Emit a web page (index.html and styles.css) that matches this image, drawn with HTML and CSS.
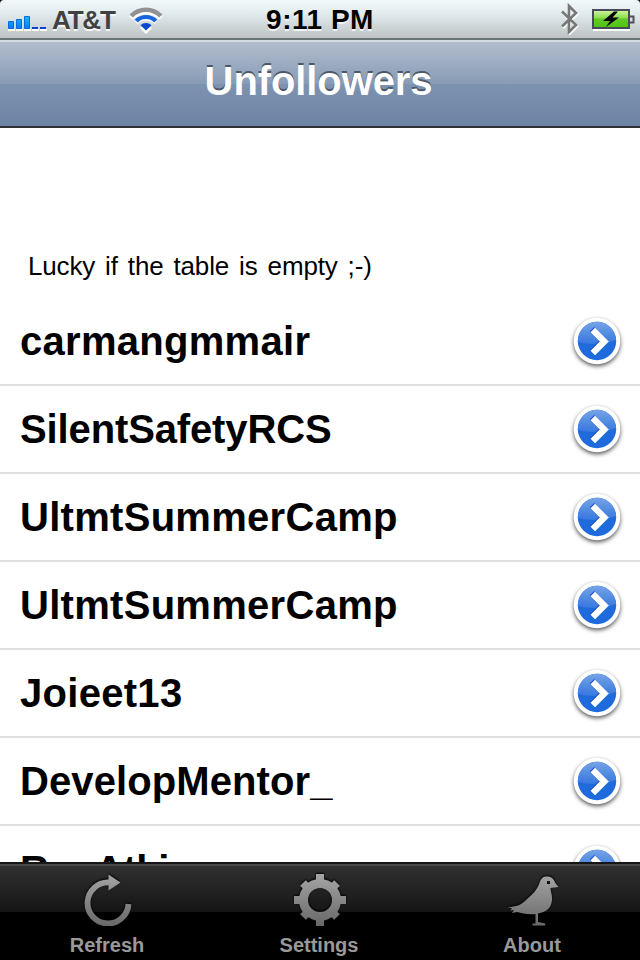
FILE: index.html
```html
<!DOCTYPE html>
<html lang="en">
<head>
<meta charset="utf-8">
<title>Unfollowers</title>
<link rel="stylesheet" href="styles.css">
</head>
<body>
<svg class="defs" aria-hidden="true">
  <defs>
    <linearGradient id="silver" gradientUnits="userSpaceOnUse" x1="0" y1="0" x2="0" y2="56"><stop offset="0" stop-color="#aaa"/><stop offset="1" stop-color="#686868"/></linearGradient>
    <linearGradient id="gloss" x1="0" y1="0" x2="0" y2="1"><stop offset="0" stop-color="#75a3e6"/><stop offset="1" stop-color="#3578dc"/></linearGradient>
    <linearGradient id="signal" x1="0" y1="0" x2="0" y2="1"><stop offset="0" stop-color="#22b4fa"/><stop offset="1" stop-color="#0879f0"/></linearGradient>
    <linearGradient id="charge" x1="0" y1="0" x2="0" y2="1"><stop offset="0" stop-color="#d3f6a0"/><stop offset=".42" stop-color="#8fe052"/><stop offset=".5" stop-color="#5fc925"/><stop offset="1" stop-color="#4fc40f"/></linearGradient>
    <symbol id="disclosure" viewBox="0 0 56 60">
      <circle class="disc-ring" cx="28" cy="29" r="23.3"/>
      <circle cx="28" cy="29" r="19.2" fill="#206bdc"/>
      <path d="M8.8 29a19.2 19.2 0 0 1 38.4 0v-1Q28 35 8.8 30z" fill="url(#gloss)"/>
      <path d="M23.500 18 35 29.500 23.500 41" transform="translate(-.6 -.8)" fill="none" stroke="#1658c8" stroke-width="6.200"/>
      <path d="M23.800 18 35.300 29.500 23.800 41" fill="none" stroke="#fff" stroke-width="6.400"/>
    </symbol>
  </defs>
</svg>
<div class="screen">
  <header class="status">
    <div class="status-left">
      <svg class="signal" width="40" height="16" viewBox="0 0 40 16">
        <path d="M0 15h7m1 0h7m1 0h7m1 0h7m1 0h7" stroke="#fff" stroke-width="2"/>
        <g fill="url(#signal)" stroke="#086be3"><path d="M.5 6.500h5v7h-5zM8.500 4.500h5v9h-5zM16.500 1.500h5v12h-5z"/></g>
        <path d="M24 13h6m2 0h6" stroke="#0c43c6" stroke-width="2"/>
      </svg>
      <span class="carrier">AT&amp;T</span>
      <svg class="wifi" width="34" height="28" viewBox="0 0 34 28">
        <g fill="none" stroke="#fff" transform="translate(0 1.5)"><path d="M2 9.5a21.500 21.500 0 0 1 30 0" stroke-width="5"/><path d="M7 14a14.500 14.500 0 0 1 20 0" stroke-width="4"/><path d="M12 18.500 17 23.500l5-5" stroke-width="3"/></g>
        <path d="M2.200 9a20.700 20.700 0 0 1 29.600 0" fill="none" stroke="#929292" stroke-width="4.600"/>
        <path d="M7.200 14a14 14 0 0 1 19.600 0" fill="none" stroke="#1566df" stroke-width="4.200"/>
        <path d="M11.500 18.300a7.500 7.500 0 0 1 11 0L17 23.600z" fill="#0b49cf"/>
      </svg>
    </div>
    <span class="clock">9:11 PM</span>
    <div class="status-right">
      <svg width="20" height="34" viewBox="0 0 20 34">
        <path d="M2 10.500 16 24l-7 7V5l7 7L2 25.500" transform="translate(.7 1.3)" fill="none" stroke="#fff" stroke-width="3"/>
        <path d="M2 10.500 16 24l-7 7V5l7 7L2 25.500" fill="none" stroke="#777" stroke-width="2.600"/>
      </svg>
      <svg width="44" height="24" viewBox="0 0 44 24">
        <path d="M1 21h37" stroke="#fff" stroke-width="2"/>
        <path d="M38 7.500h3.500v6H38" fill="#ddd" stroke="#50535e" stroke-width="2"/>
        <rect x="1" y="1" width="36" height="18" fill="url(#charge)" stroke="#474a5b" stroke-width="2"/>
        <path d="M22 2.500 11 12h7L14 18 27 8.500h-6.500L26 2.500z" fill="#000"/>
      </svg>
    </div>
  </header>
  <div class="navbar"><h1>Unfollowers</h1></div>
  <main class="content">
    <p class="caption">Lucky if the table is empty ;-)</p>
    <ul class="list">
      <li><span class="wide">carmangmmair</span><svg><use href="#disclosure"/></svg></li>
      <li><span class="tight">SilentSafetyRCS</span><svg><use href="#disclosure"/></svg></li>
      <li><span class="wide">UltmtSummerCamp</span><svg><use href="#disclosure"/></svg></li>
      <li><span class="wide">UltmtSummerCamp</span><svg><use href="#disclosure"/></svg></li>
      <li><span class="wide">Joieet13</span><svg><use href="#disclosure"/></svg></li>
      <li><span class="loose">DevelopMentor_</span><svg><use href="#disclosure"/></svg></li>
      <li><span class="partial">RoyAtkinson</span><svg><use href="#disclosure"/></svg></li>
    </ul>
  </main>
  <nav class="tabs">
    <a class="tab">
      <svg width="60" height="56" viewBox="0 0 60 56">
        <path d="M51.500 34A20.500 20.500 0 1 1 32 12.500" fill="none" stroke="url(#silver)" stroke-width="5.800"/>
        <path d="M31.500 4.500 43.500 12.500 31.500 20.500z" fill="url(#silver)"/>
      </svg>
      <span>Refresh</span>
    </a>
    <a class="tab">
      <svg width="60" height="56" viewBox="0 0 60 56">
        <g fill="none" stroke="url(#silver)">
          <circle cx="31" cy="30" r="16.500" stroke-width="9"/>
          <path stroke-width="8" d="M31.010 4 31 12m0 36 .01 8M5 30l8 .01m36 0L57 30"/>
          <path d="m14 13 6 6m22 22 6 6m0-34-6 6M20 41l-6 6" stroke-width="8"/>
        </g>
      </svg>
      <span>Settings</span>
    </a>
    <a class="tab">
      <svg width="60" height="56" viewBox="0 0 60 56">
        <path fill="url(#silver)" fill-rule="evenodd" d="M6 37c8 0 13-2 18-7 7-6 11-10 13.500-17C39 7.500 42 6 46 6.500c4 .5 6 3 7 6l3.500 4.500c-3 .5-6 .5-8 1 0 4 2 7 1.500 12-.5 8-6 12-14 13.500v8.500l7.500 1.500-.5 2H30.500v-2h3V44C26 45 20 43 15 42l-5 1 2-3-4 .5 2-2z M45 11v3h3v-3z"/>
      </svg>
      <span>About</span>
    </a>
  </nav>
</div>
</body>
</html>
```
FILE: styles.css
```css
* { box-sizing: border-box; }
body { margin: 0; background: #000; font-family: "Liberation Sans", Arial, sans-serif; }
.defs { position: absolute; width: 0; height: 0; }
.screen { width: 640px; height: 960px; display: flex; flex-direction: column; overflow: hidden; }
.status {
  height: 40px; flex: none; display: grid; grid-template-columns: 1fr auto 1fr;
  background: linear-gradient(#f2f9fb, #e2ebee 35%, #bdc3c5); border-bottom: 2px solid #687475;
  border-radius: 4px 4px 0 0;
}
.status svg { display: block; flex: none; }
.status-left { display: flex; padding-left: 8px; }
.signal { margin-top: 15px; }
.carrier { width: 64px; margin-left: 4px; font-size: 26px; line-height: 40px; font-weight: bold; letter-spacing: -1.2px; color: #414141; text-shadow: 0 2px #f5f7f7; white-space: nowrap; }
.wifi { margin: 7px 0 0 13px; }
.clock { font-size: 28px; line-height: 39px; font-weight: bold; letter-spacing: .5px; color: #000; text-shadow: 0 2px #f0f3f3; }
.status-right { display: flex; justify-content: flex-end; gap: 12px; padding: 1px 4px 0 0; }
.status-right svg + svg { margin-top: 8px; }
.navbar {
  height: 88px; flex: none; border-top: 2px solid #d3dae3; border-bottom: 2px solid #2d3034;
  background: linear-gradient(#b1bdcd, #889bb5 50%, #7e93b0 50%, #6c83a4);
}
.navbar h1 { margin: 0; padding-right: 3px; text-align: center; font-size: 40px; line-height: 78px; letter-spacing: -.1px; color: #fff; text-shadow: 0 -2px #4b5868; }
.content { flex: 1; min-height: 0; overflow: hidden; background: #fff; padding-top: 123px; }
.caption { margin: 0; height: 47px; padding-left: 28px; font-size: 26px; line-height: 30px; letter-spacing: -.17px; color: #000; white-space: nowrap; word-spacing: 3px; }
.list { margin: 0; padding: 0; list-style: none; }
.list li { height: 88px; border-bottom: 2px solid #e0e0e0; display: flex; align-items: center; justify-content: space-between; padding: 0 15px 0 20px; font-size: 40px; font-weight: bold; color: #000; }
.list svg { width: 56px; height: 60px; margin-top: 2px; }
.wide { letter-spacing: .29px; }
.loose { letter-spacing: .1px; }
.tight { letter-spacing: -.13px; }
.partial { padding-top: 2px; letter-spacing: -.3px; }
.disc-ring { fill: #fff; filter: drop-shadow(0 2px 2px rgba(0, 0, 0, .65)); }
.tabs {
  height: 98px; flex: none; display: grid; grid-template-columns: 214px 210px 216px;
  border-top: 2px solid #161616; background: linear-gradient(#484848 2px, #303030 2px, #151515 48px, #000 48px);
}
.tab { display: flex; flex-direction: column; align-items: center; padding-top: 6px; font-size: 20px; line-height: 24px; font-weight: bold; color: #999; }
.tab svg { display: block; filter: drop-shadow(0 -1px 1px #000); }
.tab span { margin-top: 7px; }
```
